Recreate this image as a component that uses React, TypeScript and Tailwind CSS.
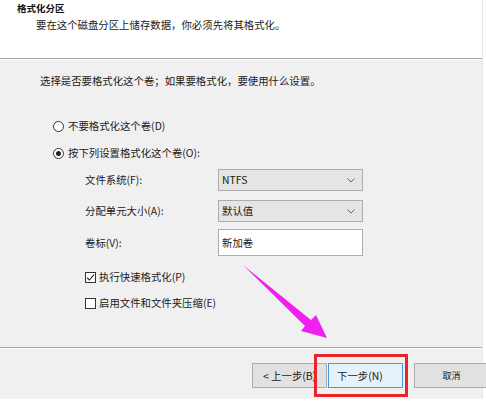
import React from "react";

function Radio({ checked }: { checked?: boolean }) {
  return (
    <span className="w-[11px] h-[11px] rounded-full border border-[#333] bg-white flex items-center justify-center shrink-0">
      {checked && <span className="w-[5px] h-[5px] rounded-full bg-[#222]" />}
    </span>
  );
}

function Check({ checked }: { checked?: boolean }) {
  return (
    <span className="w-[11px] h-[11px] border border-[#333] bg-white flex items-center justify-center shrink-0">
      {checked && (
        <svg width="9" height="9" viewBox="0 0 9 9">
          <path d="M1 4.6 L3.4 7 L8 1.6" fill="none" stroke="#222" strokeWidth="1.1" />
        </svg>
      )}
    </span>
  );
}

function Chevron() {
  return (
    <svg width="8" height="5" viewBox="0 0 8 5" className="shrink-0">
      <path d="M0.5 0.5 L4 4 L7.5 0.5" fill="none" stroke="#666" strokeWidth="1" />
    </svg>
  );
}

function Select({ value }: { value: string }) {
  return (
    <div className="w-[145px] h-[22px] border border-[#adadad] bg-[#e5e5e5] flex items-center justify-between pl-[3px] pr-[7px]">
      <span>{value}</span>
      <Chevron />
    </div>
  );
}

function FieldRow({ label, children, className }: { label: string; children: React.ReactNode; className?: string }) {
  return (
    <div className={"flex items-center " + (className ?? "")}>
      <span className="w-[134px] pl-[1px]">{label}</span>
      {children}
    </div>
  );
}

export default function App() {
  return (
    <div className="w-[486px] h-[402px] bg-white relative overflow-hidden text-[10.4px] leading-[14px] text-[#1a1a1a] font-['Noto_Sans_CJK_SC','Noto_Sans_CJK_JP',sans-serif]">
      <div className="w-[483px] h-[399px] flex flex-col bg-[#f0f0f0] border-r border-[#e6e6e6]">
        {/* header */}
        <div className="h-[59px] bg-white border-b border-[#a3a3a3] flex flex-col pl-[17px] pt-[1px]">
          <div className="font-bold text-[9.5px] text-[#111]">格式化分区</div>
          <div className="mt-[3px] pl-[19px]">要在这个磁盘分区上储存数据，你必须先将其格式化。</div>
        </div>
        <div className="h-px bg-white" />

        {/* body */}
        <div className="flex-1 flex flex-col pl-[40px] pt-[14px] border-l-[2px] border-[#f0f0f0]">
          <div className="-ml-[2px]">选择是否要格式化这个卷；如果要格式化，要使用什么设置。</div>

          <div className="flex items-center gap-[4px] mt-[31px] ml-[11px]">
            <Radio />
            <span>不要格式化这个卷(D)</span>
          </div>
          <div className="flex items-center gap-[4px] mt-[13px] ml-[11px]">
            <Radio checked />
            <span>按下列设置格式化这个卷(O):</span>
          </div>

          <div className="flex flex-col ml-[42px]">
            <FieldRow label="文件系统(F):" className="mt-[9px]">
              <Select value="NTFS" />
            </FieldRow>
            <FieldRow label="分配单元大小(A):" className="mt-[9px]">
              <Select value="默认值" />
            </FieldRow>
            <FieldRow label="卷标(V):" className="mt-[7px]">
              <div className="w-[145px] h-[27px] border border-[#adadad] bg-white flex items-center pl-[3px]">
                新加卷
              </div>
            </FieldRow>

            <div className="flex items-center gap-[3px] mt-[14px] ml-[1px]">
              <Check checked />
              <span>执行快速格式化(P)</span>
            </div>
            <div className="flex items-center gap-[3px] mt-[12px] ml-[1px]">
              <Check />
              <span>启用文件和文件夹压缩(E)</span>
            </div>
          </div>
        </div>

        {/* footer */}
        <div className="h-px bg-[#a3a3a3]" />
        <div className="h-px bg-white" />
        <div className="h-[50px] flex items-start pt-[14px] pl-[252px] gap-[1px]">
          <button className="w-[75px] h-[25px] border border-[#adadad] bg-[#e1e1e1] flex items-center pl-[10px] shrink-0 whitespace-nowrap overflow-hidden">
            &lt; 上一步(B)
          </button>
          <button className="w-[75px] h-[25px] border border-[#4a97da] bg-[#e5f1fb] flex items-center pl-[8px] shrink-0">
            下一步(N)
          </button>
          <button className="ml-[10px] w-[75px] h-[25px] border border-[#adadad] bg-[#e1e1e1] flex items-center justify-center shrink-0 text-[9px]">
            取消
          </button>
        </div>
      </div>

      {/* annotation arrow */}
      <svg className="absolute left-0 top-0 pointer-events-none" width="486" height="402" viewBox="0 0 486 402">
        <polygon
          points="243,265 311,320 316,315 327,338 301,331 305,326"
          fill="#f020f0"
        />
      </svg>

      {/* highlight box */}
      <div className="absolute left-[314px] top-[354px] w-[94px] h-[43px] border-[3px] border-[#e8262a] pointer-events-none" />
    </div>
  );
}
